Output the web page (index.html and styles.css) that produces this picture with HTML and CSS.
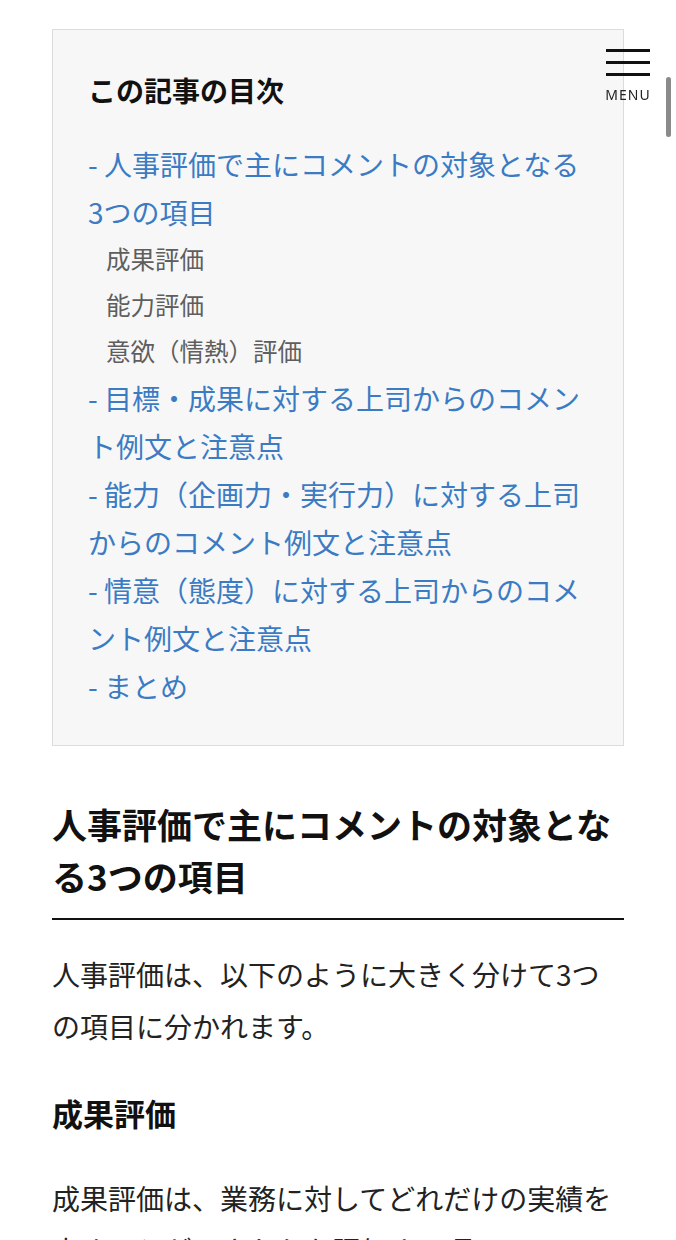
FILE: index.html
```html
<!DOCTYPE html>
<html lang="ja">
<head>
    <meta charset="UTF-8">
    <meta name="viewport" content="width=device-width, initial-scale=1.0">
    <title>人事評価のコメント例文</title>
    <link rel="stylesheet" href="styles.css">
</head>
<body>
    <button class="menu-btn" type="button">
        <span class="menu-bars">
            <span></span>
            <span></span>
            <span></span>
        </span>
        <span class="menu-label">MENU</span>
    </button>
    <div class="scroll-thumb"></div>

    <main class="article">
        <div class="toc">
            <p class="toc-title">この記事の目次</p>
            <ul class="toc-list">
                <li><a href="#s1">- 人事評価で主にコメントの対象となる3つの項目</a></li>
                <li class="toc-sub">成果評価</li>
                <li class="toc-sub">能力評価</li>
                <li class="toc-sub">意欲（情熱）評価</li>
                <li><a href="#s2">- 目標・成果に対する上司からのコメント例文と注意点</a></li>
                <li><a href="#s3">- 能力（企画力・実行力）に対する上司からのコメント例文と注意点</a></li>
                <li><a href="#s4">- 情意（態度）に対する上司からのコメント例文と注意点</a></li>
                <li><a href="#s5">- まとめ</a></li>
            </ul>
        </div>

        <h2 id="s1" class="section-title">人事評価で主にコメントの対象となる3つの項目</h2>
        <p class="text">人事評価は、以下のように大きく分けて3つの項目に分かれます。</p>

        <h3 class="sub-title">成果評価</h3>
        <p class="text">成果評価は、業務に対してどれだけの実績を出すことができたかを評価する項目で3つの中でも最も重視されます。</p>
    </main>
</body>
</html>
```

FILE: styles.css
```css
body {
    margin: 0;
    font-family: "Noto Sans CJK JP", "Noto Sans", sans-serif;
    color: #222;
    background: #fff;
}
.article {
    padding: 29px 52px 40px;
}
.toc {
    background-color: #f7f7f7;
    border: 1px solid #dcdcdc;
    padding: 36px 36px 35px 35px;
}
.toc-title {
    margin: 0 0 26px;
    font-size: 28px;
    font-weight: bold;
    line-height: 48px;
    color: #111;
}
.toc-list {
    list-style: none;
    margin: 0;
    padding: 0;
}
.toc-list li {
    font-size: 28px;
    line-height: 48px;
}
.toc-list a {
    color: #3b7bc4;
    text-decoration: none;
}
.toc-list .toc-sub {
    font-size: 24.5px;
    line-height: 46px;
    padding-left: 18px;
    color: #5e5e5e;
}
.section-title {
    margin: 52px 0 0;
    padding-bottom: 16px;
    border-bottom: 2px solid #111;
    font-size: 35px;
    line-height: 52px;
    font-weight: bold;
    color: #111;
}
.text {
    margin: 28px 0 0;
    font-size: 28px;
    line-height: 52px;
}
.sub-title {
    margin: 38px 0 0;
    font-size: 31px;
    line-height: 46px;
    font-weight: bold;
    color: #111;
}
.sub-title + .text {
    margin-top: 36px;
}
/* fixed header menu */
.menu-btn {
    position: fixed;
    top: 49px;
    right: 24px;
    width: 48px;
    padding: 0;
    border: none;
    background: none;
    display: flex;
    flex-direction: column;
    align-items: center;
    gap: 11px;
    cursor: pointer;
}
.menu-bars {
    display: flex;
    flex-direction: column;
    gap: 9px;
}
.menu-bars span {
    display: block;
    width: 44px;
    height: 3px;
    background: #111;
}
.menu-label {
    font-family: "Noto Sans", "DejaVu Sans", sans-serif;
    font-size: 14px;
    letter-spacing: 1px;
    color: #222;
    line-height: 16px;
}
.scroll-thumb {
    position: fixed;
    top: 77px;
    right: 5px;
    width: 5px;
    height: 60px;
    border-radius: 3px;
    background: #8a8a8a;
}
```
